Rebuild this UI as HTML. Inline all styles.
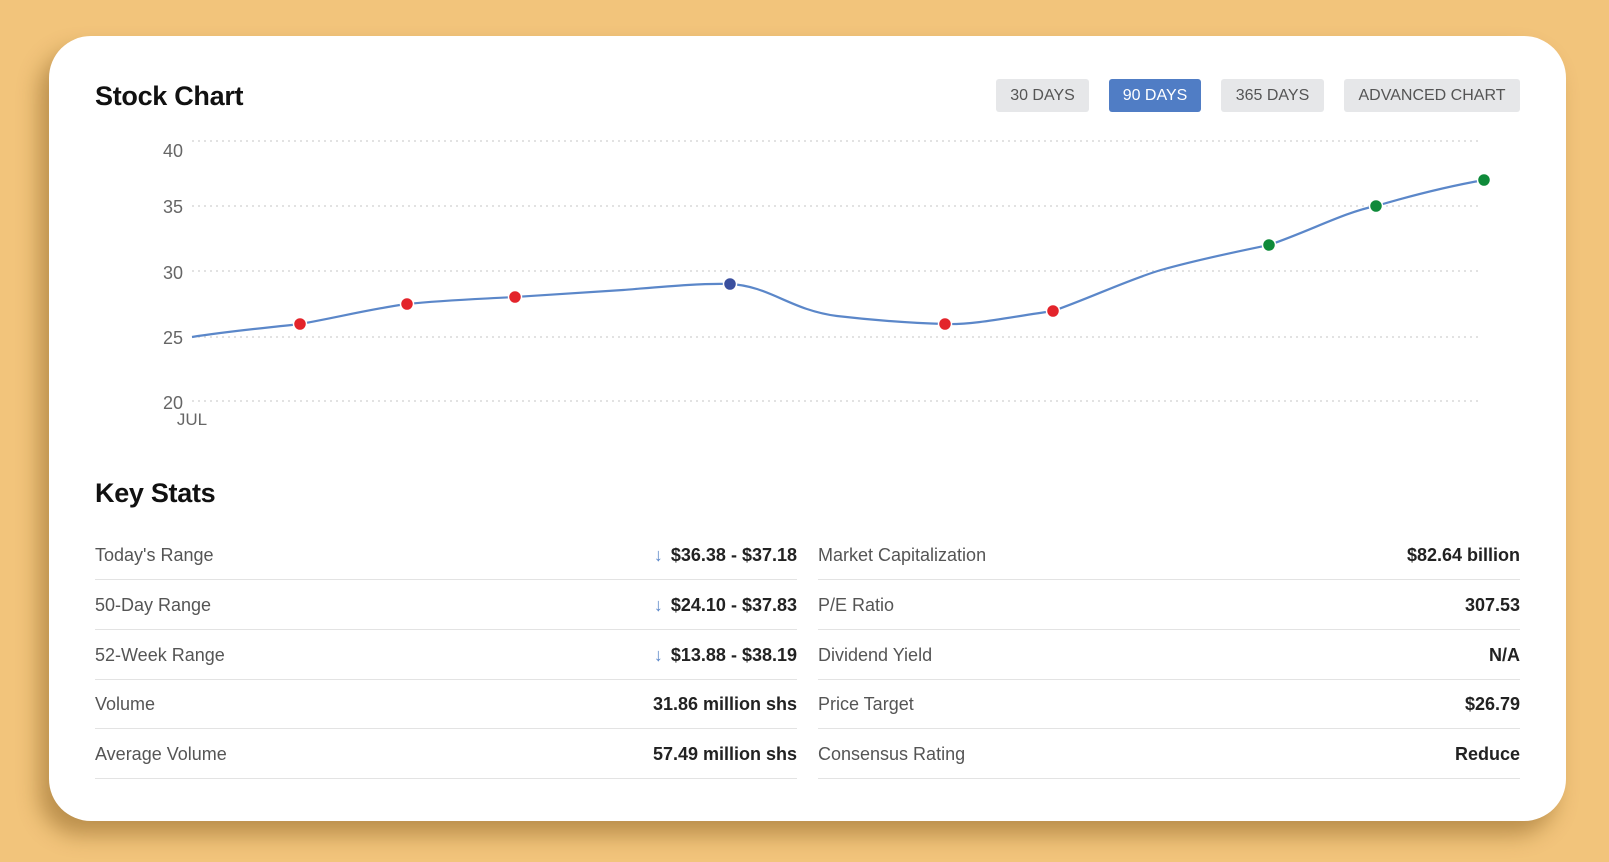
<!DOCTYPE html>
<html><head><meta charset="utf-8"><style>
*{margin:0;padding:0;box-sizing:border-box}
body{width:1609px;height:862px;background:#f2c47b;font-family:"Liberation Sans",sans-serif;position:relative;overflow:hidden}
.card{position:absolute;left:49px;top:36px;width:1517px;height:785px;background:#fff;border-radius:42px;box-shadow:-10px 14px 22px rgba(120,80,20,.45)}
h2{position:absolute;font-size:27px;font-weight:bold;color:#111;letter-spacing:-0.3px}
.btn{position:absolute;top:79px;height:33px;background:#e6e7e9;color:#555;font-size:16px;line-height:33px;text-align:center;border-radius:3px}
.btn.on{background:#507dc5;color:#fff}
.row{position:absolute;height:50px;border-bottom:1px solid #e3e3e3;font-size:18px;display:flex;justify-content:space-between;align-items:center;padding-top:2px}
.row .l{color:#555}
.row .v{color:#222;font-weight:bold}
.ar{color:#5b87c9;font-weight:normal;margin-right:8px}
</style></head><body>
<div class="card"></div>
<h2 style="left:95px;top:81px">Stock Chart</h2>
<div class="btn" style="left:996px;width:93px">30 DAYS</div>
<div class="btn on" style="left:1109px;width:92px">90 DAYS</div>
<div class="btn" style="left:1221px;width:103px">365 DAYS</div>
<div class="btn" style="left:1344px;width:176px">ADVANCED CHART</div>
<svg style="position:absolute;left:0;top:0" width="1609" height="440">
<g stroke="#d8d8d8" stroke-width="1.5" stroke-dasharray="2 4">
<line x1="192" y1="141" x2="1481" y2="141"/><line x1="192" y1="206" x2="1481" y2="206"/><line x1="192" y1="271" x2="1481" y2="271"/><line x1="192" y1="337" x2="1481" y2="337"/><line x1="192" y1="401" x2="1481" y2="401"/>
</g>
<g fill="#666" font-size="18" text-anchor="end" font-family="Liberation Sans">
<text x="183" y="157">40</text><text x="183" y="213">35</text><text x="183" y="279">30</text><text x="183" y="344">25</text><text x="183" y="409">20</text>
<text x="192" y="425" text-anchor="middle" font-size="17">JUL</text>
</g>
<path d="M192,337 C230,331 265,328 300,324 C335,318 370,309 407,304 C445,300 480,299 515,297 C560,294 610,291 623,290 C660,287 700,283 730,284 C770,286 790,310 837,316 C880,321 910,323 945,324 C975,325 1010,317 1053,311 C1090,298 1130,279 1161,270 C1200,259 1240,251 1269,245 C1310,231 1345,212 1376,206 C1410,196 1450,186 1484,180" fill="none" stroke="#5b87c9" stroke-width="2.2"/>
<g stroke="#fff" stroke-width="1.5">
<circle cx="300" cy="324" r="6.5" fill="#e3242b"/><circle cx="407" cy="304" r="6.5" fill="#e3242b"/><circle cx="515" cy="297" r="6.5" fill="#e3242b"/>
<circle cx="730" cy="284" r="6.5" fill="#3a4f9e"/>
<circle cx="945" cy="324" r="6.5" fill="#e3242b"/><circle cx="1053" cy="311" r="6.5" fill="#e3242b"/>
<circle cx="1269" cy="245" r="6.5" fill="#0f8a3a"/><circle cx="1376" cy="206" r="6.5" fill="#0f8a3a"/><circle cx="1484" cy="180" r="6.5" fill="#0f8a3a"/>
</g>
</svg>
<h2 style="left:95px;top:478px">Key Stats</h2>
<div class="row" style="left:95px;top:530px;width:702px"><span class="l">Today's Range</span><span class="v"><span class="ar">↓</span>$36.38 - $37.18</span></div>
<div class="row" style="left:95px;top:580px;width:702px"><span class="l">50-Day Range</span><span class="v"><span class="ar">↓</span>$24.10 - $37.83</span></div>
<div class="row" style="left:95px;top:630px;width:702px"><span class="l">52-Week Range</span><span class="v"><span class="ar">↓</span>$13.88 - $38.19</span></div>
<div class="row" style="left:95px;top:679px;width:702px"><span class="l">Volume</span><span class="v">31.86 million shs</span></div>
<div class="row" style="left:95px;top:729px;width:702px"><span class="l">Average Volume</span><span class="v">57.49 million shs</span></div>
<div class="row" style="left:818px;top:530px;width:702px"><span class="l">Market Capitalization</span><span class="v">$82.64 billion</span></div>
<div class="row" style="left:818px;top:580px;width:702px"><span class="l">P/E Ratio</span><span class="v">307.53</span></div>
<div class="row" style="left:818px;top:630px;width:702px"><span class="l">Dividend Yield</span><span class="v">N/A</span></div>
<div class="row" style="left:818px;top:679px;width:702px"><span class="l">Price Target</span><span class="v">$26.79</span></div>
<div class="row" style="left:818px;top:729px;width:702px"><span class="l">Consensus Rating</span><span class="v">Reduce</span></div>
</body></html>
